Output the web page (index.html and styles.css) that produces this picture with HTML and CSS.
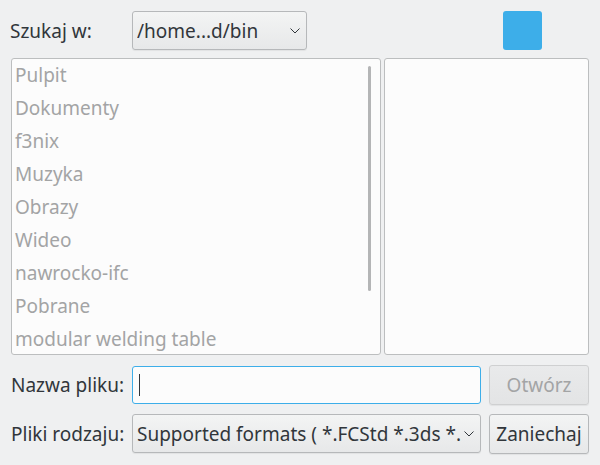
FILE: index.html
```html
<!DOCTYPE html>
<html lang="pl">
<head>
<meta charset="utf-8">
<title>Otwórz</title>
<link rel="stylesheet" href="styles.css">
</head>
<body>
<div class="dialog">
  <div class="row top">
    <span class="label label-top">Szukaj w:</span>
    <div class="combo combo-path">
      <span class="combo-text">/home...d/bin</span>
      <svg class="chev" width="10" height="6" viewBox="0 0 10 6"><path d="M0.5 0.5 L5 5 L9.5 0.5" fill="none" stroke="#31363b" stroke-width="1"/></svg>
    </div>
    <div class="swatch"></div>
  </div>
  <div class="panes">
    <div class="list">
      <div class="item">Pulpit</div>
      <div class="item">Dokumenty</div>
      <div class="item">f3nix</div>
      <div class="item">Muzyka</div>
      <div class="item">Obrazy</div>
      <div class="item">Wideo</div>
      <div class="item">nawrocko-ifc</div>
      <div class="item">Pobrane</div>
      <div class="item">modular welding table</div>
      <div class="scrollbar"></div>
    </div>
    <div class="preview"></div>
  </div>
  <div class="row">
    <span class="label">Nazwa pliku:</span>
    <div class="input"><span class="caret"></span></div>
    <div class="button disabled">Otwórz</div>
  </div>
  <div class="row row-last">
    <span class="label">Pliki rodzaju:</span>
    <div class="combo combo-filter">
      <span class="combo-text">Supported formats ( *.FCStd *.3ds *.</span>
      <svg class="chev" width="10" height="6" viewBox="0 0 10 6"><path d="M0.5 0.5 L5 5 L9.5 0.5" fill="none" stroke="#31363b" stroke-width="1"/></svg>
    </div>
    <div class="button">Zaniechaj</div>
  </div>
</div>
</body>
</html>
```
FILE: styles.css
```css
html, body {
  margin: 0;
  padding: 0;
  background: #eff0f1;
}
body {
  font-family: "Noto Sans", "DejaVu Sans", sans-serif;
  font-size: 19px;
  color: #31363b;
  width: 600px;
  height: 465px;
  overflow: hidden;
}
.dialog {
  display: flex;
  flex-direction: column;
  padding: 11px 11px 0 11px;
}
.row {
  display: flex;
  align-items: center;
  height: 39px;
}
.label {
  width: 121px;
  flex: none;
  white-space: nowrap;
}
.label-top {
  margin-left: -1px;
  width: 122px;
}
.combo {
  box-sizing: border-box;
  height: 39px;
  border: 1px solid #b6b8ba;
  border-radius: 3px;
  background: linear-gradient(#f3f4f4, #e7e8e9);
  display: flex;
  align-items: center;
  padding: 0 6px 0 4px;
  box-shadow: 0 1px 1px rgba(0,0,0,0.06);
}
.combo-text {
  flex: 1;
  white-space: nowrap;
  overflow: hidden;
}
.chev {
  flex: none;
}
.combo-path {
  width: 175px;
}
.combo-filter {
  width: 349px;
}
.swatch {
  width: 39px;
  height: 39px;
  border-radius: 3px;
  background: #3daee9;
  margin-left: auto;
  margin-right: 47px;
}
.panes {
  display: flex;
  gap: 3px;
  margin-top: 8px;
  height: 297px;
}
.list {
  position: relative;
  box-sizing: border-box;
  width: 370px;
  border: 1px solid #bcbebf;
  border-radius: 3px;
  background: #fcfcfc;
  padding: 0 0 0 3px;
  overflow: hidden;
}
.item {
  height: 33px;
  line-height: 33px;
  color: #a3a4a5;
  white-space: nowrap;
}
.scrollbar {
  position: absolute;
  left: 356px;
  top: 7px;
  width: 3px;
  height: 225px;
  border-radius: 2px;
  background: #b4b5b6;
}
.preview {
  box-sizing: border-box;
  flex: 1;
  border: 1px solid #bcbebf;
  border-radius: 3px;
  background: #fcfcfc;
}
.row + .row, .panes + .row {
  margin-top: 10px;
}
.input {
  box-sizing: border-box;
  width: 349px;
  height: 38px;
  border: 1px solid #3daee9;
  border-radius: 3px;
  background: #fcfcfc;
  display: flex;
  align-items: center;
  padding-left: 6px;
}
.caret {
  width: 1px;
  height: 22px;
  background: #31363b;
}
.button {
  box-sizing: border-box;
  width: 100px;
  height: 40px;
  margin-left: 8px;
  border: 1px solid #b6b8ba;
  border-radius: 3px;
  background: linear-gradient(#f3f4f4, #e7e8e9);
  display: flex;
  align-items: center;
  justify-content: center;
  box-shadow: 0 1px 1px rgba(0,0,0,0.06);
}
.button.disabled {
  color: #a3a4a5;
  background: linear-gradient(#e9eaeb, #e3e4e5);
  border-color: #cfd0d1;
}
```
